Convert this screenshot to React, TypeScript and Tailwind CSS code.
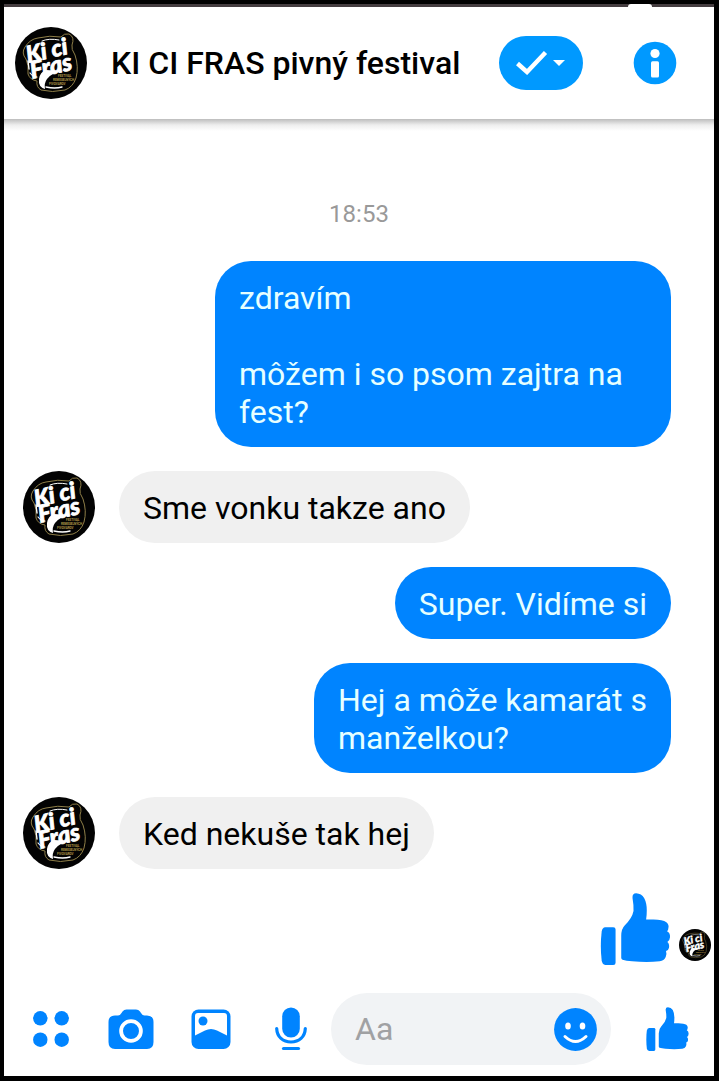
import React, { useState } from 'react'

function Logo({ className }: { className: string }) {
  return (
    <svg viewBox="0 0 72 72" className={`shrink-0 ${className}`} role="img" aria-label="KI CI FRAS">
      <circle cx="36" cy="36" r="36" fill="#030303" />
      <path
        d="M10 20Q15 12 23 11Q35 8 46 10Q49 6 54 7Q60 10 57 18Q56 22 60 28Q64 40 61 51Q58 60 50 63Q37 66 26 63Q21 60 22 54Q15 53 13 47Q14 38 11 32Q6 26 10 20Z"
        fill="none"
        stroke="#8f7f48"
        strokeWidth="1"
      />
      <g fill="none" stroke="#fff" strokeLinecap="round">
        <path d="M27 14Q34 11 44 13" strokeWidth="1" />
        <path d="M13 34L14 42" strokeWidth="1.4" />
        <path d="M15 46Q18 50 22 50" strokeWidth="1.2" />
        <path d="M31 60Q40 62 47 60" strokeWidth="1.4" />
      </g>
      <path
        d="M48 44Q36 46 32 52Q29 56 30 62Q23 60 24 52Q25 45 31 43Z"
        fill="#fff"
      />
      <g
        fill="#fff"
        stroke="#fff"
        strokeWidth="0.8"
        className="font-[Lato,'Open_Sans',sans-serif] font-black italic"
      >
        <text x="13" y="36" fontSize="23" transform="rotate(-13 13 36)">Ki ci</text>
        <text x="17" y="52" fontSize="24" transform="rotate(-13 17 52)">Fras</text>
      </g>
      <g fill="#b39a4a" className="font-[Roboto,sans-serif] font-bold">
        <text x="43" y="49.500" fontSize="3">FESTIVAL</text>
        <text x="38" y="53.500" fontSize="3">REMESELNÝCH</text>
        <text x="34" y="57.500" fontSize="3">PIVOVAROV</text>
      </g>
    </svg>
  )
}

function Thumb({ className }: { className: string }) {
  return (
    <svg viewBox="360 38 210 217" className={className} fill="#0084ff" aria-hidden="true">
      <path d="M374 141H398Q405 141 405 148V248Q405 255 398 255H374Q365 255 363 241Q358 198 363 155Q365 141 374 141Z" />
      <path d="M422 167Q422 146 433 135Q455 113 459 92Q460 76 456 53Q455 39 467 39Q483 40 491 53Q499 68 499 90Q499 107 497 118H519Q547 118 558 126Q567 133 564 144Q564 150 560 153Q570 158 569 171Q568 182 561 186Q568 192 566 203Q564 212 557 213Q560 222 556 231Q551 242 538 244Q500 248 455 244Q436 242 426 239Q422 238 422 233Z" />
    </svg>
  )
}

function Dots() {
  return (
    <svg viewBox="0 0 36 36" className="size-9" fill="#0084ff" aria-hidden="true">
      <circle cx="7.300" cy="7.300" r="7.200" />
      <circle cx="28.700" cy="7.300" r="7.200" />
      <circle cx="7.300" cy="28.700" r="7.200" />
      <circle cx="28.700" cy="28.700" r="7.200" />
    </svg>
  )
}

function Camera() {
  return (
    <svg viewBox="0 0 46 40" className="h-10 w-[46px]" aria-hidden="true">
      <path
        d="M7 6.5H10Q12 6.500 13.500 4L14.500 2.500Q16 0.500 18.500 0.500H28Q30.500 0.500 32 2.500L33 4Q34.500 6.500 36.500 6.500H39Q45.500 6.500 45.500 13V33Q45.500 40 39 40H7Q0.500 40 0.500 33V13Q0.500 6.500 7 6.500Z"
        fill="#0084ff"
      />
      <circle cx="23" cy="22" r="9.900" fill="none" stroke="#fff" strokeWidth="3.800" />
    </svg>
  )
}

function Picture() {
  return (
    <svg viewBox="0 0 40 40" className="size-10" aria-hidden="true">
      <rect x="0.500" y="0.500" width="39" height="39.500" rx="7" fill="#0084ff" />
      <path
        d="M7 4H33Q36 4 36 7V26.500L26 21.500Q20 18.500 14 21.500L4 26.500V7Q4 4 7 4Z"
        fill="#fff"
      />
      <circle cx="12" cy="12" r="4.500" fill="#0084ff" />
    </svg>
  )
}

function Mic() {
  return (
    <svg viewBox="0 0 32 44" className="h-11 w-8" aria-hidden="true">
      <rect x="7.200" y="0.500" width="17.600" height="30" rx="8.800" fill="#0084ff" />
      <g fill="none" stroke="#0084ff" strokeWidth="3.200" strokeLinecap="round">
        <path d="M1.700 21.500C2 30 8 35 16 35S30 30 30.300 21.500" />
        <path d="M8.500 41.500H23.500" />
      </g>
    </svg>
  )
}

function Smile() {
  return (
    <svg viewBox="0 0 43 43" className="size-[43px]" aria-hidden="true">
      <circle cx="21.500" cy="21.500" r="21.400" fill="#0084ff" />
      <ellipse cx="14" cy="18" rx="2.800" ry="3.600" fill="#fff" />
      <ellipse cx="28.500" cy="18" rx="2.800" ry="3.600" fill="#fff" />
      <path d="M11 28.500Q21.500 38.500 32 28.500" fill="none" stroke="#fff" strokeWidth="3" strokeLinecap="round" />
    </svg>
  )
}

function Info() {
  return (
    <svg viewBox="0 0 44 44" className="size-11" aria-hidden="true">
      <circle cx="22" cy="22" r="21.300" fill="#0099ff" />
      <circle cx="22" cy="12.500" r="4.600" fill="#fff" />
      <rect x="18" y="20.300" width="8" height="16.200" rx="1.500" fill="#fff" />
    </svg>
  )
}

type Message = { id: number; mine: boolean; text: string }

const messages: Message[] = [
  { id: 1, mine: true, text: 'zdravím\n\nmôžem i so psom zajtra na fest?' },
  { id: 2, mine: false, text: 'Sme vonku takze ano' },
  { id: 3, mine: true, text: 'Super. Vidíme si' },
  { id: 4, mine: true, text: 'Hej a môže kamarát s\nmanželkou?' },
  { id: 5, mine: false, text: 'Ked nekuše tak hej' },
]

function Bubble({ message }: { message: Message }) {
  if (message.mine) {
    return (
      <li className="flex justify-end pr-[43px]">
        <p className="max-w-[456px] rounded-[36px] bg-[#0084ff] px-6 pt-[18px] pb-4 whitespace-pre-line text-[#e6ffff]">
          {message.text}
        </p>
      </li>
    )
  }
  return (
    <li className="flex items-end gap-6 pl-[19px]">
      <Logo className="size-[72px]" />
      <p className="max-w-[456px] rounded-[36px] bg-[#f0f0f0] px-6 pt-[18px] pb-4 text-black">{message.text}</p>
    </li>
  )
}

export default function App() {
  const [draft, setDraft] = useState('')
  const tool = 'flex h-[72px] w-20 shrink-0 items-center justify-center'

  return (
    <div className="flex min-h-screen flex-col border-4 border-r-[5px] border-b-[5px] border-black bg-white font-[Roboto,'Liberation_Sans',sans-serif]">
      <div className="flex h-[3px] justify-end bg-[#443c3f] pr-[62px]">
        <span className="h-[3px] w-6 rounded-t-full bg-white" />
      </div>
      <header className="flex h-28 items-center bg-white pr-[37px] pl-[11px]">
        <Logo className="size-[72px]" />
        <h1 className="ml-6 min-w-0 flex-1 truncate text-[32px] leading-[38px] font-medium text-black">
          KI CI FRAS pivný festival
        </h1>
        <button
          type="button"
          aria-label="Mark as done"
          className="flex h-[54px] w-[84px] shrink-0 items-center justify-center rounded-[27px] bg-[#0099ff]"
        >
          <svg viewBox="0 0 50 24" className="h-6 w-[50px]" aria-hidden="true">
            <path d="M1.500 12.500L11 21L29.500 1.500" fill="none" stroke="#fff" strokeWidth="4.400" />
            <path d="M37 9H49L43 15Z" fill="#fff" />
          </svg>
        </button>
        <button type="button" aria-label="Conversation details" className="ml-[50px] shrink-0">
          <Info />
        </button>
      </header>
      <div className="h-3 bg-linear-to-b from-[#bdbdbd] via-[#eeeeee] to-white" />

      <main className="pt-[69px]">
        <p className="text-center text-2xl leading-7 text-[#999999]">
          <time dateTime="18:53">18:53</time>
        </p>
        <ul className="mt-[33px] flex flex-col gap-6 text-[32px] leading-[38px]">
          {messages.map((message) => (
            <Bubble key={message.id} message={message} />
          ))}
          <li className="flex items-end justify-end gap-2 pr-[3px]" aria-label="Thumbs up">
            <Thumb className="h-[72px] w-[71px]" />
            <Logo className="mb-1 size-8" />
          </li>
        </ul>
      </main>

      <footer className="mt-auto flex items-center px-[7px] pt-7 pb-[11px]">
        <button type="button" aria-label="More" className={tool}>
          <Dots />
        </button>
        <button type="button" aria-label="Camera" className={tool}>
          <Camera />
        </button>
        <button type="button" aria-label="Gallery" className={tool}>
          <Picture />
        </button>
        <button type="button" aria-label="Voice message" className={tool}>
          <Mic />
        </button>
        <div className="flex h-[72px] min-w-0 flex-1 items-center rounded-full bg-[#f1f3f5] pr-[14px] pl-6">
          <input
            type="text"
            aria-label="Message"
            placeholder="Aa"
            value={draft}
            onChange={(event) => setDraft(event.target.value)}
            className="min-w-0 flex-1 bg-transparent text-[32px] leading-[38px] text-black outline-none placeholder:text-[#a0a1a3]"
          />
          <button type="button" aria-label="Emoji" className="shrink-0">
            <Smile />
          </button>
        </div>
        <button type="button" aria-label="Send a thumbs up" className={`${tool} ml-4`}>
          <Thumb className="h-11 w-[43px]" />
        </button>
      </footer>
    </div>
  )
}
